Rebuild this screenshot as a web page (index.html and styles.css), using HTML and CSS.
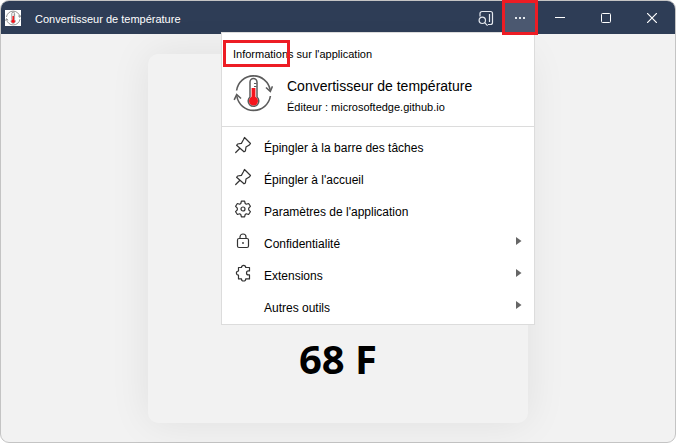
FILE: index.html
```
<!DOCTYPE html>
<html lang="fr">
<head>
    <meta charset="UTF-8">
    <meta name="viewport" content="width=device-width, initial-scale=1.0">
    <title>Convertisseur de température</title>
    <link rel="stylesheet" href="styles.css">
</head>
<body>
    <!-- Shared icons -->
    <svg class="defs" aria-hidden="true">
        <symbol id="thermo" viewBox="0 0 40 40">
            <g fill="none" stroke="#5c5c5c" stroke-width="1.600">
                <path d="M3.600 17.500A17 17 0 0 1 37.200 17"/>
                <path d="M37.400 23A17 17 0 0 1 3.800 23"/>
                <path d="M33 14.500l4.300 4 2.200-5.300M8 25.500l-4.300-4-2.500 5.300"/>
            </g>
            <path d="M17 24V9a3.500 3.500 0 0 1 7 0v15a5.300 5.300 0 1 1-7 0z" fill="#fff" stroke="#5c5c5c" stroke-width="1.500"/>
            <circle cx="20.500" cy="28" r="4.500" fill="#f5141c"/>
            <path d="M18.600 15h3.800v12h-3.800z" fill="#f5141c"/>
            <path d="M21 10.500h2.500M21 13.500h2.500" stroke="#5c5c5c"/>
        </symbol>
        <symbol id="pin" viewBox="0 0 18 18">
            <path d="M10.500 1.500l6 6-1.200 1.600-3.300 2-.6 3.800-1.400.9L2.600 9.300l1-1.300 3.800-.6 2-3.700zM5.700 12.500l-4 4" fill="none" stroke="#333" stroke-width="1.200" stroke-linejoin="round" stroke-linecap="round"/>
        </symbol>
        <symbol id="arrow" viewBox="0 0 6 8">
            <path d="M0 0l5.500 4L0 8z" fill="#666"/>
        </symbol>
    </svg>

    <div class="window">
        <header class="titlebar">
            <svg class="app-icon"><use href="#thermo"/></svg>
            <h1 class="title">Convertisseur de température</h1>
            <button class="bar-btn" type="button" aria-label="Rechercher">
                <svg width="16" height="16" viewBox="0 0 16 16" fill="none" stroke="#e4e8ee" stroke-width="1.200">
                    <path d="M2 6.500V3.500a2 2 0 0 1 2-2h8.500a2 2 0 0 1 2 2v9a2 2 0 0 1-2 2H10M11.500 4v8"/>
                    <circle cx="4.300" cy="10.300" r="3.200"/>
                    <path d="M6.600 12.600l3 3"/>
                </svg>
            </button>
            <button class="bar-btn active" type="button" aria-label="Paramètres et plus">
                <svg width="12" height="2" viewBox="0 0 12 2" fill="#e4e8ee">
                    <path d="M1 0h2v2H1zM5 0h2v2H5zM9 0h2v2H9z"/>
                </svg>
                <span class="mark mark-btn"></span>
            </button>
            <button class="win-btn" type="button" aria-label="Réduire">
                <svg width="10" height="10" viewBox="0 0 10 10" stroke="#fff"><path d="M0 4.500h10"/></svg>
            </button>
            <button class="win-btn" type="button" aria-label="Agrandir">
                <svg width="10" height="10" viewBox="0 0 10 10" fill="none" stroke="#fff"><rect x=".5" y=".5" width="9" height="9" rx="1"/></svg>
            </button>
            <button class="win-btn" type="button" aria-label="Fermer">
                <svg width="10" height="10" viewBox="0 0 10 10" stroke="#fff" stroke-width="1.200"><path d="M0 0l10 10M10 0L0 10"/></svg>
            </button>
        </header>

        <main class="content">
            <section class="card">
                <output class="result">68 F</output>
            </section>
        </main>

        <div class="menu">
            <div class="menu-head">
                <h2 class="menu-title">Informations sur l'application<span class="mark mark-text"></span></h2>
                <div class="app-info">
                    <svg class="app-logo"><use href="#thermo"/></svg>
                    <div class="app-text">
                        <p class="app-name">Convertisseur de température</p>
                        <p class="app-editor">Éditeur : microsoftedge.github.io</p>
                    </div>
                </div>
            </div>
            <div class="menu-list">
                <button class="item" type="button">
                    <svg class="icon"><use href="#pin"/></svg>
                    <span class="label">Épingler à la barre des tâches</span>
                </button>
                <button class="item" type="button">
                    <svg class="icon"><use href="#pin"/></svg>
                    <span class="label">Épingler à l'accueil</span>
                </button>
                <button class="item" type="button">
                    <svg class="icon" viewBox="0 0 18 18" fill="none" stroke="#333" stroke-width="1.200" stroke-linejoin="round">
                        <path d="M7.400 1.200h3.200l.6 2.300 1.100.7 2.300-.7 1.800 2.800-1.700 1.900v1.600l1.700 1.900-1.800 2.800-2.300-.7-1.100.7-.6 2.300H7.400l-.6-2.300-1.100-.7-2.300.7-1.800-2.800 1.700-1.900V8.200L1.600 6.300l1.800-2.800 2.300.7 1.100-.7z"/>
                        <circle cx="9" cy="9" r="2"/>
                    </svg>
                    <span class="label">Paramètres de l'application</span>
                </button>
                <button class="item" type="button">
                    <svg class="icon" viewBox="0 0 18 18" fill="none" stroke="#333" stroke-width="1.200">
                        <rect x="3.500" y="6.500" width="11" height="9" rx="1.500"/>
                        <path d="M6 6.500V5a3 3 0 0 1 6 0v1.500"/>
                        <circle cx="9" cy="11" r=".9" fill="#333" stroke="none"/>
                    </svg>
                    <span class="label">Confidentialité</span>
                    <svg class="arrow"><use href="#arrow"/></svg>
                </button>
                <button class="item" type="button">
                    <svg class="icon" viewBox="0 0 18 18" fill="none" stroke="#333" stroke-width="1.200" stroke-linejoin="round">
                        <path d="M4.500 3.500h3a2.100 2.100 0 0 1 4.200 0h3.800v3.400h-1a2 2 0 0 0 0 4h1v4h-3.800a2.100 2.100 0 0 1-4.200 0h-3v-3.700a2.100 2.100 0 0 1 0-4.200z"/>
                    </svg>
                    <span class="label">Extensions</span>
                    <svg class="arrow"><use href="#arrow"/></svg>
                </button>
                <button class="item" type="button">
                    <span class="icon"></span>
                    <span class="label">Autres outils</span>
                    <svg class="arrow"><use href="#arrow"/></svg>
                </button>
            </div>
        </div>
    </div>
</body>
</html>
```
FILE: styles.css
```
* {
    box-sizing: border-box;
}
body {
    margin: 0;
    background-color: #fff;
    font-family: "Liberation Sans", Arial, sans-serif;
    font-size: 12px;
    color: #000;
}
h1, h2, p {
    margin: 0;
    font-weight: normal;
}
button {
    padding: 0;
    border: none;
    background: none;
    font: inherit;
    color: inherit;
}
svg {
    display: block;
    flex-shrink: 0;
}
.defs {
    position: absolute;
    width: 0;
    height: 0;
}
.window {
    position: relative;
    display: flex;
    flex-direction: column;
    min-height: 100vh;
    border: 1px solid #c4c4c4;
    border-radius: 9px;
    background-color: #f2f2f2;
}

/* Title bar */
.titlebar {
    display: flex;
    align-items: center;
    height: 33px;
    padding-left: 4px;
    border-radius: 8px 8px 0 0;
    background-color: #2e3d56;
    color: #fff;
}
.app-icon {
    width: 16px;
    height: 16px;
    background-color: #fff;
}
.title {
    flex: 1;
    margin-left: 14px;
    padding-top: 2px;
    font-size: 11px;
}
.bar-btn, .win-btn {
    position: relative;
    display: flex;
    align-items: center;
    justify-content: center;
    height: 100%;
}
.bar-btn {
    width: 34px;
}
.win-btn {
    width: 46px;
}
.active {
    background-color: #4b5870;
}

/* Red call-outs */
.mark {
    position: absolute;
    border: 3px solid #ed1c24;
}
.mark-btn {
    inset: -1px;
    z-index: 2;
}
.mark-text {
    top: -7px;
    left: -10px;
    width: 67px;
    height: 27px;
}

/* Converter */
.content {
    display: flex;
    flex: 1;
    justify-content: center;
    padding: 20px 0 19px;
}
.card {
    display: flex;
    align-items: flex-end;
    justify-content: center;
    width: 380px;
    padding-bottom: 36px;
    border-radius: 10px;
    background-color: #f2f2f2;
    box-shadow: 0 0 40px rgba(0, 0, 0, 0.08);
}
.result {
    font-family: "Noto Sans", sans-serif;
    font-size: 40px;
    font-weight: bold;
    line-height: 56px;
}

/* App menu */
.menu {
    position: absolute;
    top: 31px;
    right: 140px;
    z-index: 1;
    width: 314px;
    border: 1px solid #dcdcdc;
    background-color: #fff;
}
.menu-head {
    padding: 14px 11px 13px;
    border-bottom: 1px solid #dcdcdc;
}
.menu-title {
    position: relative;
    font-size: 11px;
    line-height: 14px;
}
.app-info {
    display: flex;
    align-items: center;
    gap: 14px;
    margin-top: 12px;
}
.app-logo {
    width: 40px;
    height: 40px;
}
.app-text {
    padding-top: 8px;
}
.app-name {
    font-size: 14px;
    line-height: 20px;
}
.app-editor {
    font-size: 11px;
    line-height: 22px;
}
.menu-head .app-info {
    height: 40px;
}
.menu-list {
    padding: 2px 0 3px;
}
.item {
    display: flex;
    align-items: center;
    width: 100%;
    height: 32px;
    padding: 0 12px;
    text-align: left;
}
.icon {
    width: 18px;
    height: 18px;
}
.label {
    flex: 1;
    margin-left: 12px;
    padding-top: 6px;
}
.arrow {
    width: 6px;
    height: 8px;
}
```
